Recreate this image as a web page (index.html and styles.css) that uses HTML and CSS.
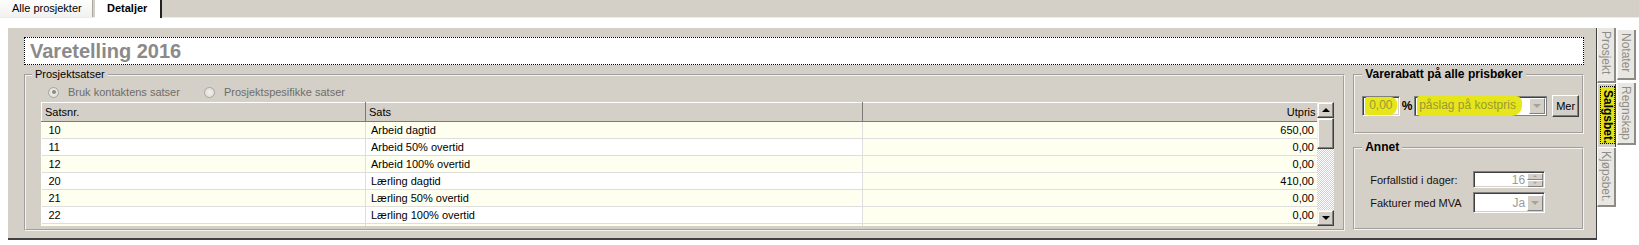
FILE: index.html
```html
<!DOCTYPE html>
<html lang="no">
<head>
    <meta charset="UTF-8">
    <title>Varetelling 2016</title>
    <link rel="stylesheet" href="styles.css">
</head>
<body>
    <div class="tabstrip">
        <div class="tab">Alle prosjekter</div>
        <div class="tab active">Detaljer</div>
    </div>

    <div class="main">
        <div class="panel">
            <div class="title">Varetelling 2016</div>

            <div class="content">
                <!-- Prosjektsatser -->
                <fieldset class="group rates">
                    <legend>Prosjektsatser</legend>
                    <div class="radios">
                        <label class="radio-item"><span class="radio checked"></span>Bruk kontaktens satser</label>
                        <label class="radio-item"><span class="radio"></span>Prosjektspesifikke satser</label>
                    </div>
                    <div class="grid">
                        <div class="grid-body">
                            <table>
                                <colgroup>
                                    <col class="col-nr">
                                    <col class="col-sats">
                                    <col class="col-pris">
                                </colgroup>
                                <thead>
                                    <tr>
                                        <th>Satsnr.</th>
                                        <th>Sats</th>
                                        <th class="num">Utpris</th>
                                    </tr>
                                </thead>
                                <tbody>
                                    <tr class="alt"><td class="nr">10</td><td>Arbeid dagtid</td><td class="num">650,00</td></tr>
                                    <tr><td class="nr">11</td><td>Arbeid 50% overtid</td><td class="num">0,00</td></tr>
                                    <tr class="alt"><td class="nr">12</td><td>Arbeid 100% overtid</td><td class="num">0,00</td></tr>
                                    <tr><td class="nr">20</td><td>Lærling dagtid</td><td class="num">410,00</td></tr>
                                    <tr class="alt"><td class="nr">21</td><td>Lærling 50% overtid</td><td class="num">0,00</td></tr>
                                    <tr><td class="nr">22</td><td>Lærling 100% overtid</td><td class="num">0,00</td></tr>
                                    <tr class="alt"><td class="nr"></td><td></td><td class="num"></td></tr>
                                </tbody>
                            </table>
                        </div>
                        <div class="scrollbar">
                            <div class="sb-btn"><span class="arrow up"></span></div>
                            <div class="sb-thumb"></div>
                            <div class="sb-track"></div>
                            <div class="sb-btn"><span class="arrow down"></span></div>
                        </div>
                    </div>
                </fieldset>

                <div class="side">
                    <!-- Varerabatt -->
                    <fieldset class="group discount">
                        <legend class="bold">Varerabatt på alle prisbøker</legend>
                        <div class="discount-row">
                            <div class="field small"><span class="mark">0,00</span></div>
                            <span class="percent">%</span>
                            <div class="combo">
                                <span class="mark">påslag på kostpris</span>
                                <span class="drop"><span class="arrow down grey"></span></span>
                            </div>
                            <button class="btn">Mer</button>
                        </div>
                    </fieldset>

                    <!-- Annet -->
                    <fieldset class="group other">
                        <legend class="bold">Annet</legend>
                        <div class="form-row first">
                            <span class="label">Forfallstid i dager:</span>
                            <div class="field spin">
                                <span class="value">16</span>
                                <span class="spinner">
                                    <span class="spin-btn"><span class="arrow up tiny"></span></span>
                                    <span class="spin-btn"><span class="arrow down tiny"></span></span>
                                </span>
                            </div>
                        </div>
                        <div class="form-row">
                            <span class="label">Fakturer med MVA</span>
                            <div class="field select">
                                <span class="value">Ja</span>
                                <span class="drop"><span class="arrow down grey"></span></span>
                            </div>
                        </div>
                    </fieldset>
                </div>
            </div>
        </div>

        <!-- Side tabs -->
        <div class="vtabs">
            <div class="vcol">
                <div class="vtab t-prosjekt">Prosjekt</div>
                <div class="vtab t-salg selected"><span class="focus">Salgsbet.</span></div>
                <div class="vtab t-kjop">Kjøpsbet.</div>
            </div>
            <div class="vcol second">
                <div class="vtab t-notater">Notater</div>
                <div class="vtab t-regnskap">Regnskap</div>
            </div>
        </div>
    </div>
</body>
</html>
```

FILE: styles.css
```css
/* Global Styles */
body {
    margin: 0;
    background-color: #fff;
    font-family: 'Liberation Sans', Arial, sans-serif;
    font-size: 11px;
    color: #000;
}

/* Top tab strip */
.tabstrip {
    display: flex;
    height: 17px;
    background-color: #d4d0c8;
    border-bottom: 1px solid #ecebe6;
}

.tab {
    width: 93px;
    box-sizing: border-box;
    padding-left: 12px;
    line-height: 17px;
    background: linear-gradient(#fdfdfd, #f1f1ef);
    border-right: 1px solid #a9a69f;
}

.tab.active {
    width: 67px;
    margin-left: 2px;
    padding-left: 11px;
    font-weight: bold;
    background: #fff;
    border-left: 1px solid #fff;
    border-right: 2px solid #222;
    height: 18px;
}

/* Main area */
.main {
    display: flex;
    margin-top: 10px;
    padding-left: 8px;
}

.panel {
    width: 1589px;
    height: 212px;
    box-sizing: border-box;
    padding: 9px 12px 0 16px;
    background-color: #d4d0c8;
    border-right: 1px solid #404040;
    border-bottom: 2px solid #404040;
}

.title {
    height: 28px;
    box-sizing: border-box;
    padding-left: 5px;
    background: #fff;
    border: 1px dotted #000;
    font-size: 20px;
    font-weight: bold;
    line-height: 26px;
    color: #8a8a8a;
}

.content {
    display: flex;
    gap: 8px;
    margin-top: 2px;
}

/* Group boxes */
.group {
    margin: 0;
    min-width: 0;
    border: 2px groove #f4f3ef;
}

.group legend {
    padding: 0 3px;
    line-height: 15px;
}

.group legend.bold {
    font-size: 12px;
    font-weight: bold;
    padding: 0 3px;
}

.rates {
    width: 1322px;
    box-sizing: border-box;
    height: 164px;
    padding: 0 9px 0 15px;
}

.rates legend {
    margin-left: -9px;
}

.radios {
    display: flex;
    height: 14px;
    margin-top: 3px;
    padding-left: 7px;
    color: #6f6d68;
}

.radio-item {
    display: flex;
    align-items: center;
    gap: 9px;
    margin-right: 24px;
}

.radio {
    width: 11px;
    height: 11px;
    border-radius: 50%;
    border: 1px solid #a9a69f;
    background: radial-gradient(#f1f0ec, #dcd9d2);
    box-sizing: border-box;
    position: relative;
}

.radio.checked::after {
    content: "";
    position: absolute;
    left: 2.5px;
    top: 2.5px;
    width: 4px;
    height: 4px;
    border-radius: 50%;
    background: #8b8984;
}

/* Data grid */
.grid {
    display: flex;
    margin-top: 3px;
    height: 124px;
}

.grid-body {
    width: 1276px;
    overflow: hidden;
    background: #fff;
}

table {
    width: 1276px;
    table-layout: fixed;
    border-collapse: collapse;
}

.col-nr { width: 324px; }
.col-sats { width: 497px; }
.col-pris { width: 455px; }

th {
    height: 19px;
    padding: 0 0 0 3px;
    box-sizing: border-box;
    text-align: left;
    font-weight: normal;
    background: #d4d0c8;
    border-top: 1px solid #fff;
    border-bottom: 1px solid #7c7a75;
    border-right: 1px solid #7c7a75;
    border-left: 1px solid #fff;
}

th:last-child {
    border-right: none;
}

th.num {
    text-align: right;
    padding-right: 2px;
}

td {
    height: 17px;
    padding: 0 0 0 5px;
    box-sizing: border-box;
    line-height: 16px;
    border-bottom: 1px solid #dedede;
    border-right: 1px solid #dedede;
    white-space: nowrap;
}

td.nr {
    padding-left: 7px;
}

td.num {
    text-align: right;
    padding-right: 3px;
    background: #fffff0;
}

tr.alt td {
    background: #fffff0;
}

/* Scrollbar */
.scrollbar {
    width: 17px;
    display: flex;
    flex-direction: column;
}

.sb-btn, .sb-thumb {
    box-sizing: border-box;
    background: #d4d0c8;
    border-top: 1px solid #f2f1ed;
    border-left: 1px solid #f2f1ed;
    border-right: 1px solid #404040;
    border-bottom: 1px solid #404040;
    box-shadow: inset -1px -1px 0 #808080, inset 1px 1px 0 #fff;
}

.sb-btn {
    height: 16px;
    display: flex;
    align-items: center;
    justify-content: center;
}

.sb-thumb {
    height: 31px;
}

.sb-track {
    flex: 1;
    background-color: #fff;
    background-image: conic-gradient(#d4d0c8 25%, #fff 0 50%, #d4d0c8 0 75%, #fff 0);
    background-size: 2px 2px;
}

.arrow {
    width: 0;
    height: 0;
    border-left: 4px solid transparent;
    border-right: 4px solid transparent;
}

.arrow.up {
    border-bottom: 4px solid #000;
}

.arrow.down {
    border-top: 4px solid #000;
}

.arrow.grey.down {
    border-top-color: #a6a39c;
}

.arrow.tiny {
    border-left-width: 2px;
    border-right-width: 2px;
}

.arrow.tiny.up {
    border-bottom: 2px solid #a6a39c;
}

.arrow.tiny.down {
    border-top: 2px solid #a6a39c;
}

/* Right side */
.side {
    width: 231px;
    display: flex;
    flex-direction: column;
    gap: 6px;
}

.discount {
    height: 67px;
    box-sizing: border-box;
    padding: 0 0 0 7px;
}

.discount legend {
    margin-left: 0;
}

.discount-row {
    display: flex;
    align-items: center;
    margin-top: 13px;
}

.field {
    box-sizing: border-box;
    background: #fff;
    border-top: 1px solid #808080;
    border-left: 1px solid #808080;
    border-right: 1px solid #fff;
    border-bottom: 1px solid #fff;
    box-shadow: inset 1px 1px 0 #404040, inset -1px -1px 0 #d4d0c8;
    display: flex;
    align-items: center;
}

.field.small {
    width: 38px;
    height: 20px;
    padding-left: 2px;
}

.mark {
    background: #e7e61b;
    color: #9a9934;
    font-size: 12px;
    line-height: 17px;
    padding: 0 4px 1px 4px;
    border-radius: 2px 6px 8px 3px;
    white-space: nowrap;
}

.percent {
    width: 14px;
    text-align: center;
    font-weight: bold;
    font-size: 12px;
}

.combo {
    width: 133px;
    height: 20px;
    box-sizing: border-box;
    display: flex;
    align-items: center;
    padding-left: 2px;
    background: #fff;
    border: 1px solid #808080;
    box-shadow: inset 1px 1px 0 #404040;
}

.combo .mark {
    padding: 1px 6px 2px 2px;
    border-radius: 3px 6px 10px 4px;
}

.drop {
    width: 16px;
    height: 16px;
    margin-left: auto;
    margin-right: 1px;
    box-sizing: border-box;
    display: flex;
    align-items: center;
    justify-content: center;
    background: #d4d0c8;
    border-top: 1px solid #fff;
    border-left: 1px solid #fff;
    border-right: 1px solid #808080;
    border-bottom: 1px solid #808080;
}

.btn {
    width: 27px;
    height: 22px;
    margin-left: 5px;
    padding: 0;
    font-family: inherit;
    font-size: 11px;
    background: #d4d0c8;
    border-top: 1px solid #fff;
    border-left: 1px solid #fff;
    border-right: 1px solid #404040;
    border-bottom: 1px solid #404040;
    box-shadow: inset -1px -1px 0 #808080;
}

.other {
    height: 90px;
    box-sizing: border-box;
    padding: 0 0 0 15px;
}

.other legend {
    margin-left: -8px;
}

.form-row {
    display: flex;
    align-items: center;
    height: 21px;
    margin-top: 2px;
}

.form-row.first {
    margin-top: 14px;
}

.label {
    width: 103px;
    color: #1a1010;
}

.field.spin, .field.select {
    width: 72px;
    justify-content: flex-end;
    color: #9d9b97;
}

.field.spin {
    height: 17px;
}

.field.select {
    height: 21px;
}

.field.select .drop {
    margin-left: 0;
}

.value {
    font-size: 12px;
    padding-right: 2px;
}

.spinner {
    display: flex;
    flex-direction: column;
    margin-right: 1px;
}

.spin-btn {
    width: 16px;
    height: 7px;
    box-sizing: border-box;
    display: flex;
    align-items: center;
    justify-content: center;
    background: #d4d0c8;
    border-top: 1px solid #fff;
    border-left: 1px solid #fff;
    border-right: 1px solid #808080;
    border-bottom: 1px solid #808080;
}

/* Vertical tabs */
.vtabs {
    display: flex;
    gap: 1px;
}

.vcol {
    display: flex;
    flex-direction: column;
    gap: 1px;
}

.vcol.second {
    padding-top: 2px;
    gap: 3px;
}

.vtab {
    width: 19px;
    box-sizing: border-box;
    writing-mode: vertical-rl;
    font-size: 12px;
    line-height: 17px;
    padding-top: 3px;
    color: #8f8d89;
    background: #e9e7e1;
    border-left: 1px solid #fafafa;
    border-right: 2px solid #8d8b86;
    border-bottom: 2px solid #8d8b86;
}

.t-prosjekt { height: 55px; }
.t-salg { height: 63px; }
.t-kjop { height: 59px; }
.t-notater { height: 50px; }
.t-regnskap { height: 62px; }

.vtab.selected {
    padding: 2px 0 0 1px;
    background: #d4d0c8;
    border-right: 1px solid #404040;
    border-bottom: none;
}

.focus {
    display: block;
    height: 58px;
    width: 15px;
    box-sizing: border-box;
    padding-top: 3px;
    border: 1px dotted #000;
    background: #e2e21b;
    color: #000;
    font-weight: bold;
    line-height: 13px;
}
```
